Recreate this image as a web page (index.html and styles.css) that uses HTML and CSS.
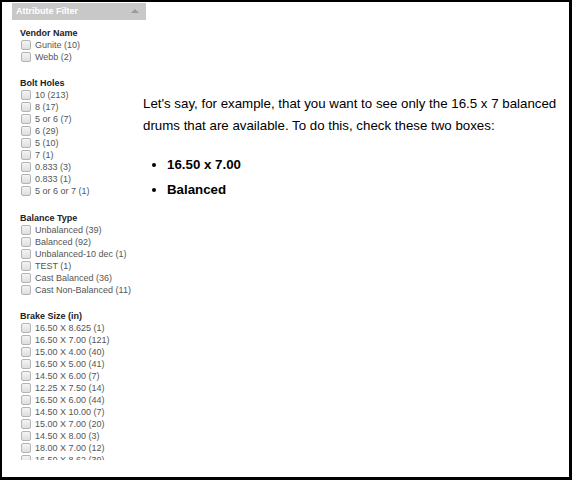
FILE: index.html
```html
<!DOCTYPE html>
<html>
<head>
<meta charset="utf-8">
<link rel="stylesheet" href="styles.css">
</head>
<body>
<div class="frame">
  <aside class="sidebar">
    <div class="panel-head"><span>Attribute Filter</span><span class="caret"></span></div>
    <div class="panel-body">
      <section class="group">
        <div class="group-title">Vendor Name</div>
        <div class="opt"><span class="cb"></span>Gunite (10)</div>
        <div class="opt"><span class="cb"></span>Webb (2)</div>
      </section>
      <section class="group">
        <div class="group-title">Bolt Holes</div>
        <div class="opt"><span class="cb"></span>10 (213)</div>
        <div class="opt"><span class="cb"></span>8 (17)</div>
        <div class="opt"><span class="cb"></span>5 or 6 (7)</div>
        <div class="opt"><span class="cb"></span>6 (29)</div>
        <div class="opt"><span class="cb"></span>5 (10)</div>
        <div class="opt"><span class="cb"></span>7 (1)</div>
        <div class="opt"><span class="cb"></span>0.833 (3)</div>
        <div class="opt"><span class="cb"></span>0.833 (1)</div>
        <div class="opt"><span class="cb"></span>5 or 6 or 7 (1)</div>
      </section>
      <section class="group group-wide">
        <div class="group-title">Balance Type</div>
        <div class="opt"><span class="cb"></span>Unbalanced (39)</div>
        <div class="opt"><span class="cb"></span>Balanced (92)</div>
        <div class="opt"><span class="cb"></span>Unbalanced-10 dec (1)</div>
        <div class="opt"><span class="cb"></span>TEST (1)</div>
        <div class="opt"><span class="cb"></span>Cast Balanced (36)</div>
        <div class="opt"><span class="cb"></span>Cast Non-Balanced (11)</div>
      </section>
      <section class="group">
        <div class="group-title">Brake Size (in)</div>
        <div class="opt"><span class="cb"></span>16.50 X 8.625 (1)</div>
        <div class="opt"><span class="cb"></span>16.50 X 7.00 (121)</div>
        <div class="opt"><span class="cb"></span>15.00 X 4.00 (40)</div>
        <div class="opt"><span class="cb"></span>16.50 X 5.00 (41)</div>
        <div class="opt"><span class="cb"></span>14.50 X 6.00 (7)</div>
        <div class="opt"><span class="cb"></span>12.25 X 7.50 (14)</div>
        <div class="opt"><span class="cb"></span>16.50 X 6.00 (44)</div>
        <div class="opt"><span class="cb"></span>14.50 X 10.00 (7)</div>
        <div class="opt"><span class="cb"></span>15.00 X 7.00 (20)</div>
        <div class="opt"><span class="cb"></span>14.50 X 8.00 (3)</div>
        <div class="opt"><span class="cb"></span>18.00 X 7.00 (12)</div>
        <div class="opt"><span class="cb"></span>16.50 X 8.62 (39)</div>
        <div class="opt"><span class="cb"></span>16.50 X 6.50 (4)</div>
      </section>
    </div>
  </aside>
  <main class="content">
    <p class="intro">Let's say, for example, that you want to see only the 16.5 x 7 balanced drums that are available. To do this, check these two boxes:</p>
    <ul class="picks">
      <li>16.50 x 7.00</li>
      <li>Balanced</li>
    </ul>
  </main>
</div>
</body>
</html>
```
FILE: styles.css
```css
html, body {
  margin: 0;
  padding: 0;
  background: #fff;
}
.frame {
  box-sizing: border-box;
  width: 572px;
  height: 480px;
  border-style: solid;
  border-color: #000;
  border-width: 2px 3px 3px 2px;
  display: flex;
  align-items: flex-start;
  font-family: "Liberation Sans", Arial, sans-serif;
  overflow: hidden;
}
.sidebar {
  flex: 0 0 131px;
  min-width: 0;
  margin: 1px 0 0 10px;
}
.panel-head {
  box-sizing: border-box;
  width: 134px;
  height: 17px;
  background: #c8c8c8;
  color: #fff;
  font-size: 9px;
  font-weight: bold;
  line-height: 17px;
  padding: 0 7px 0 4px;
  display: flex;
  justify-content: space-between;
  align-items: center;
}
.caret {
  width: 0;
  height: 0;
  border-left: 4px solid transparent;
  border-right: 4px solid transparent;
  border-bottom: 4px solid #9a9a9a;
  margin-top: -1px;
}
.panel-body {
  height: 433px;
  overflow: hidden;
  padding: 7px 0 0 8px;
}
.group {
  margin-bottom: 14px;
}
.group-wide {
  margin-top: 15px;
}
.group-title {
  font-size: 9px;
  font-weight: bold;
  color: #222;
  line-height: 12px;
}
.opt {
  font-size: 9px;
  line-height: 12px;
  color: #555;
  display: flex;
  align-items: center;
  white-space: nowrap;
}
.cb {
  box-sizing: border-box;
  width: 10px;
  height: 10px;
  border: 1px solid #b4b4b4;
  border-radius: 2px;
  background: linear-gradient(#f4f4f4, #dedede);
  margin: 0 4px 0 1px;
  flex: 0 0 auto;
}
.content {
  flex: 1;
  padding-top: 91px;
  color: #000;
  font-size: 13.3px;
}
.intro {
  margin: 0;
  line-height: 22px;
  width: 420px;
}
.picks {
  margin: 17px 0 0;
  padding-left: 24px;
}
.picks li {
  font-weight: bold;
  line-height: 22px;
  margin-bottom: 3px;
}
```
